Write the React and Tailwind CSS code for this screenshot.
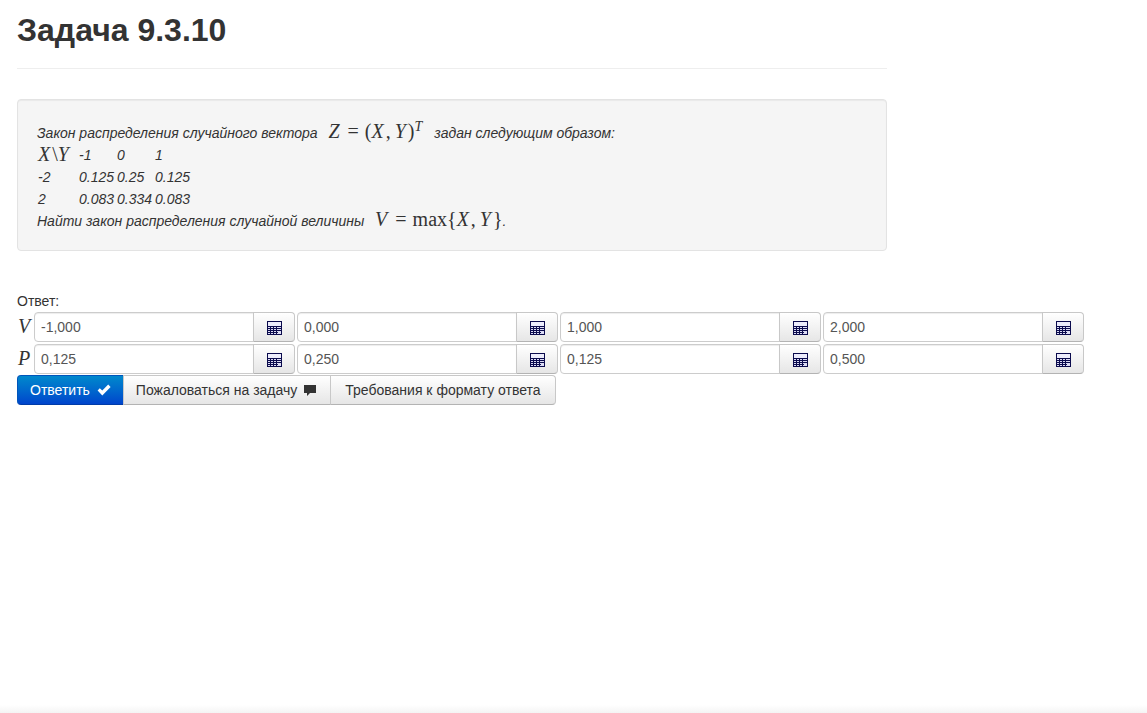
import React from "react";

const rows = [
  { name: "V", values: ["-1,000", "0,000", "1,000", "2,000"] },
  { name: "P", values: ["0,125", "0,250", "0,125", "0,500"] },
];

const distribution = [
  ["-2", "0.125", "0.25", "0.125"],
  ["2", "0.083", "0.334", "0.083"],
];

const greyButton =
  "border border-[#c8c8c8] border-b-[#b3b3b3] bg-linear-to-b from-white to-[#e6e6e6] text-[#333]";

function Sym({ children }) {
  return (
    <span className="pr-[2px] font-['Liberation_Serif',serif] text-[20px] leading-[18px] italic">
      {children}
    </span>
  );
}

function Op({ children }) {
  return (
    <span className="font-['Liberation_Serif',serif] text-[20px] leading-[18px] not-italic">
      {children}
    </span>
  );
}

function CalculatorIcon() {
  return (
    <svg width="15" height="14" viewBox="0 0 15 14" shapeRendering="crispEdges" aria-hidden="true">
      <rect width="15" height="14" fill="#0b0b4d" />
      <rect x="1" y="1" width="13" height="4" fill="#ececfb" />
      <g fill="#dcdcf5">
        {[6, 8, 10, 12].map((y) => (
          <g key={y}>
            <rect x="1" y={y} width="2" height="1" />
            <rect x="4" y={y} width="2" height="1" />
            <rect x="7" y={y} width="2" height="1" />
            <rect x="10" y={y} width="4" height="1" />
          </g>
        ))}
        <rect x="11" y="10" width="3" height="3" />
      </g>
    </svg>
  );
}

function CheckIcon() {
  return (
    <svg width="14" height="14" viewBox="0 0 14 14" aria-hidden="true">
      <path d="M0.6 7.6 2.8 5.2 5.3 7.6 11.2 1.6 13.6 4 5.3 12.4Z" fill="#fff" />
    </svg>
  );
}

function CommentIcon() {
  return (
    <svg width="14" height="14" viewBox="0 0 14 14" aria-hidden="true">
      <path d="M0 2h12v8H6l-3 3v-3H0Z" fill="#333" />
    </svg>
  );
}

export default function App() {
  return (
    <div className="flex min-h-screen flex-col bg-white font-['Liberation_Sans',Arial,sans-serif] text-sm leading-5 text-[#333]">
      <main className="grow px-[17px] pt-[10px]">
        <header className="max-w-[870px] border-b border-[#eee] pb-[18px]">
          <h1 className="text-[32px] leading-10 font-bold">Задача 9.3.10</h1>
        </header>

        <section className="mt-[30px] max-w-[870px] rounded border border-[#e3e3e3] bg-[#f5f5f5] p-[19px] italic shadow-[inset_0_1px_1px_rgba(0,0,0,0.05)]">
          <p className="flex h-[25px] items-baseline pt-[3px] whitespace-pre">
            <span>Закон распределения случайного вектора </span>
            <span className="flex items-baseline pr-3 pl-[7px]">
              <Sym>Z</Sym>
              <span className="px-[6px]"><Op>=</Op></span>
              <Op>(</Op>
              <Sym>X</Sym>
              <span className="pr-1"><Op>,</Op></span>
              <Sym>Y</Sym>
              <Op>)</Op>
              <sup className="font-['Liberation_Serif',serif] text-sm">T</sup>
            </span>
            <span>задан следующим образом:</span>
          </p>
          <table className="border-collapse">
            <thead>
              <tr>
                <th className="w-[41px] p-px text-left font-normal whitespace-nowrap">
                  <span className="flex h-5 items-start">
                    <Sym>X</Sym>
                    <Op>\</Op>
                    <Sym>Y</Sym>
                  </span>
                </th>
                <th className="w-[38px] p-px text-left font-normal">-1</th>
                <th className="w-[38px] p-px text-left font-normal">0</th>
                <th className="w-[38px] p-px text-left font-normal">1</th>
              </tr>
            </thead>
            <tbody>
              {distribution.map((cells) => (
                <tr key={cells[0]}>
                  {cells.map((cell, i) => (
                    <td key={i} className="p-px">{cell}</td>
                  ))}
                </tr>
              ))}
            </tbody>
          </table>
          <p className="flex h-[21px] items-baseline whitespace-pre">
            <span>Найти закон распределения случайной величины </span>
            <span className="flex items-baseline pl-[7px]">
              <Sym>V</Sym>
              <span className="px-[6px]"><Op>=</Op></span>
              <Op>max{"{"}</Op>
              <Sym>X</Sym>
              <span className="pr-1"><Op>,</Op></span>
              <Sym>Y</Sym>
              <Op>{"}"}</Op>
            </span>
            <span>.</span>
          </p>
        </section>

        <form className="mt-10" onSubmit={(e) => e.preventDefault()}>
          <p>Ответ:</p>
          <table className="border-collapse">
            <tbody>
              {rows.map((row) => (
                <tr key={row.name}>
                  <th className="w-4 p-0 pl-px text-left font-normal"><Sym>{row.name}</Sym></th>
                  {row.values.map((value, i) => (
                    <td key={i} className="p-px">
                      <div className="flex">
                        <input
                          type="text"
                          defaultValue={value}
                          aria-label={`${row.name} ${i + 1}`}
                          className="h-[30px] w-[220px] rounded-l border border-[#ccc] bg-white px-[6px] text-[#555] shadow-[inset_0_1px_1px_rgba(0,0,0,0.075)] outline-none"
                        />
                        <button
                          type="button"
                          aria-label="Калькулятор"
                          className={`${greyButton} -ml-px flex h-[30px] w-[42px] items-center justify-center rounded-r pt-px`}
                        >
                          <CalculatorIcon />
                        </button>
                      </div>
                    </td>
                  ))}
                </tr>
              ))}
            </tbody>
          </table>
          <div className="flex">
            <button
              type="submit"
              className="flex h-[30px] items-center gap-[7px] rounded-l border border-[#0055bb] border-b-[#003ca8] bg-linear-to-b from-[#0088cc] to-[#0044cc] px-3 text-white"
            >
              Ответить <CheckIcon />
            </button>
            <button type="button" className={`${greyButton} -ml-px flex h-[30px] items-center gap-[7px] px-3`}>
              Пожаловаться на задачу <CommentIcon />
            </button>
            <button type="button" className={`${greyButton} -ml-px h-[30px] rounded-r px-[14px]`}>
              Требования к формату ответа
            </button>
          </div>
        </form>
      </main>
      <footer className="h-2 bg-linear-to-b from-white to-[#f4f4f4]" />
    </div>
  );
}
